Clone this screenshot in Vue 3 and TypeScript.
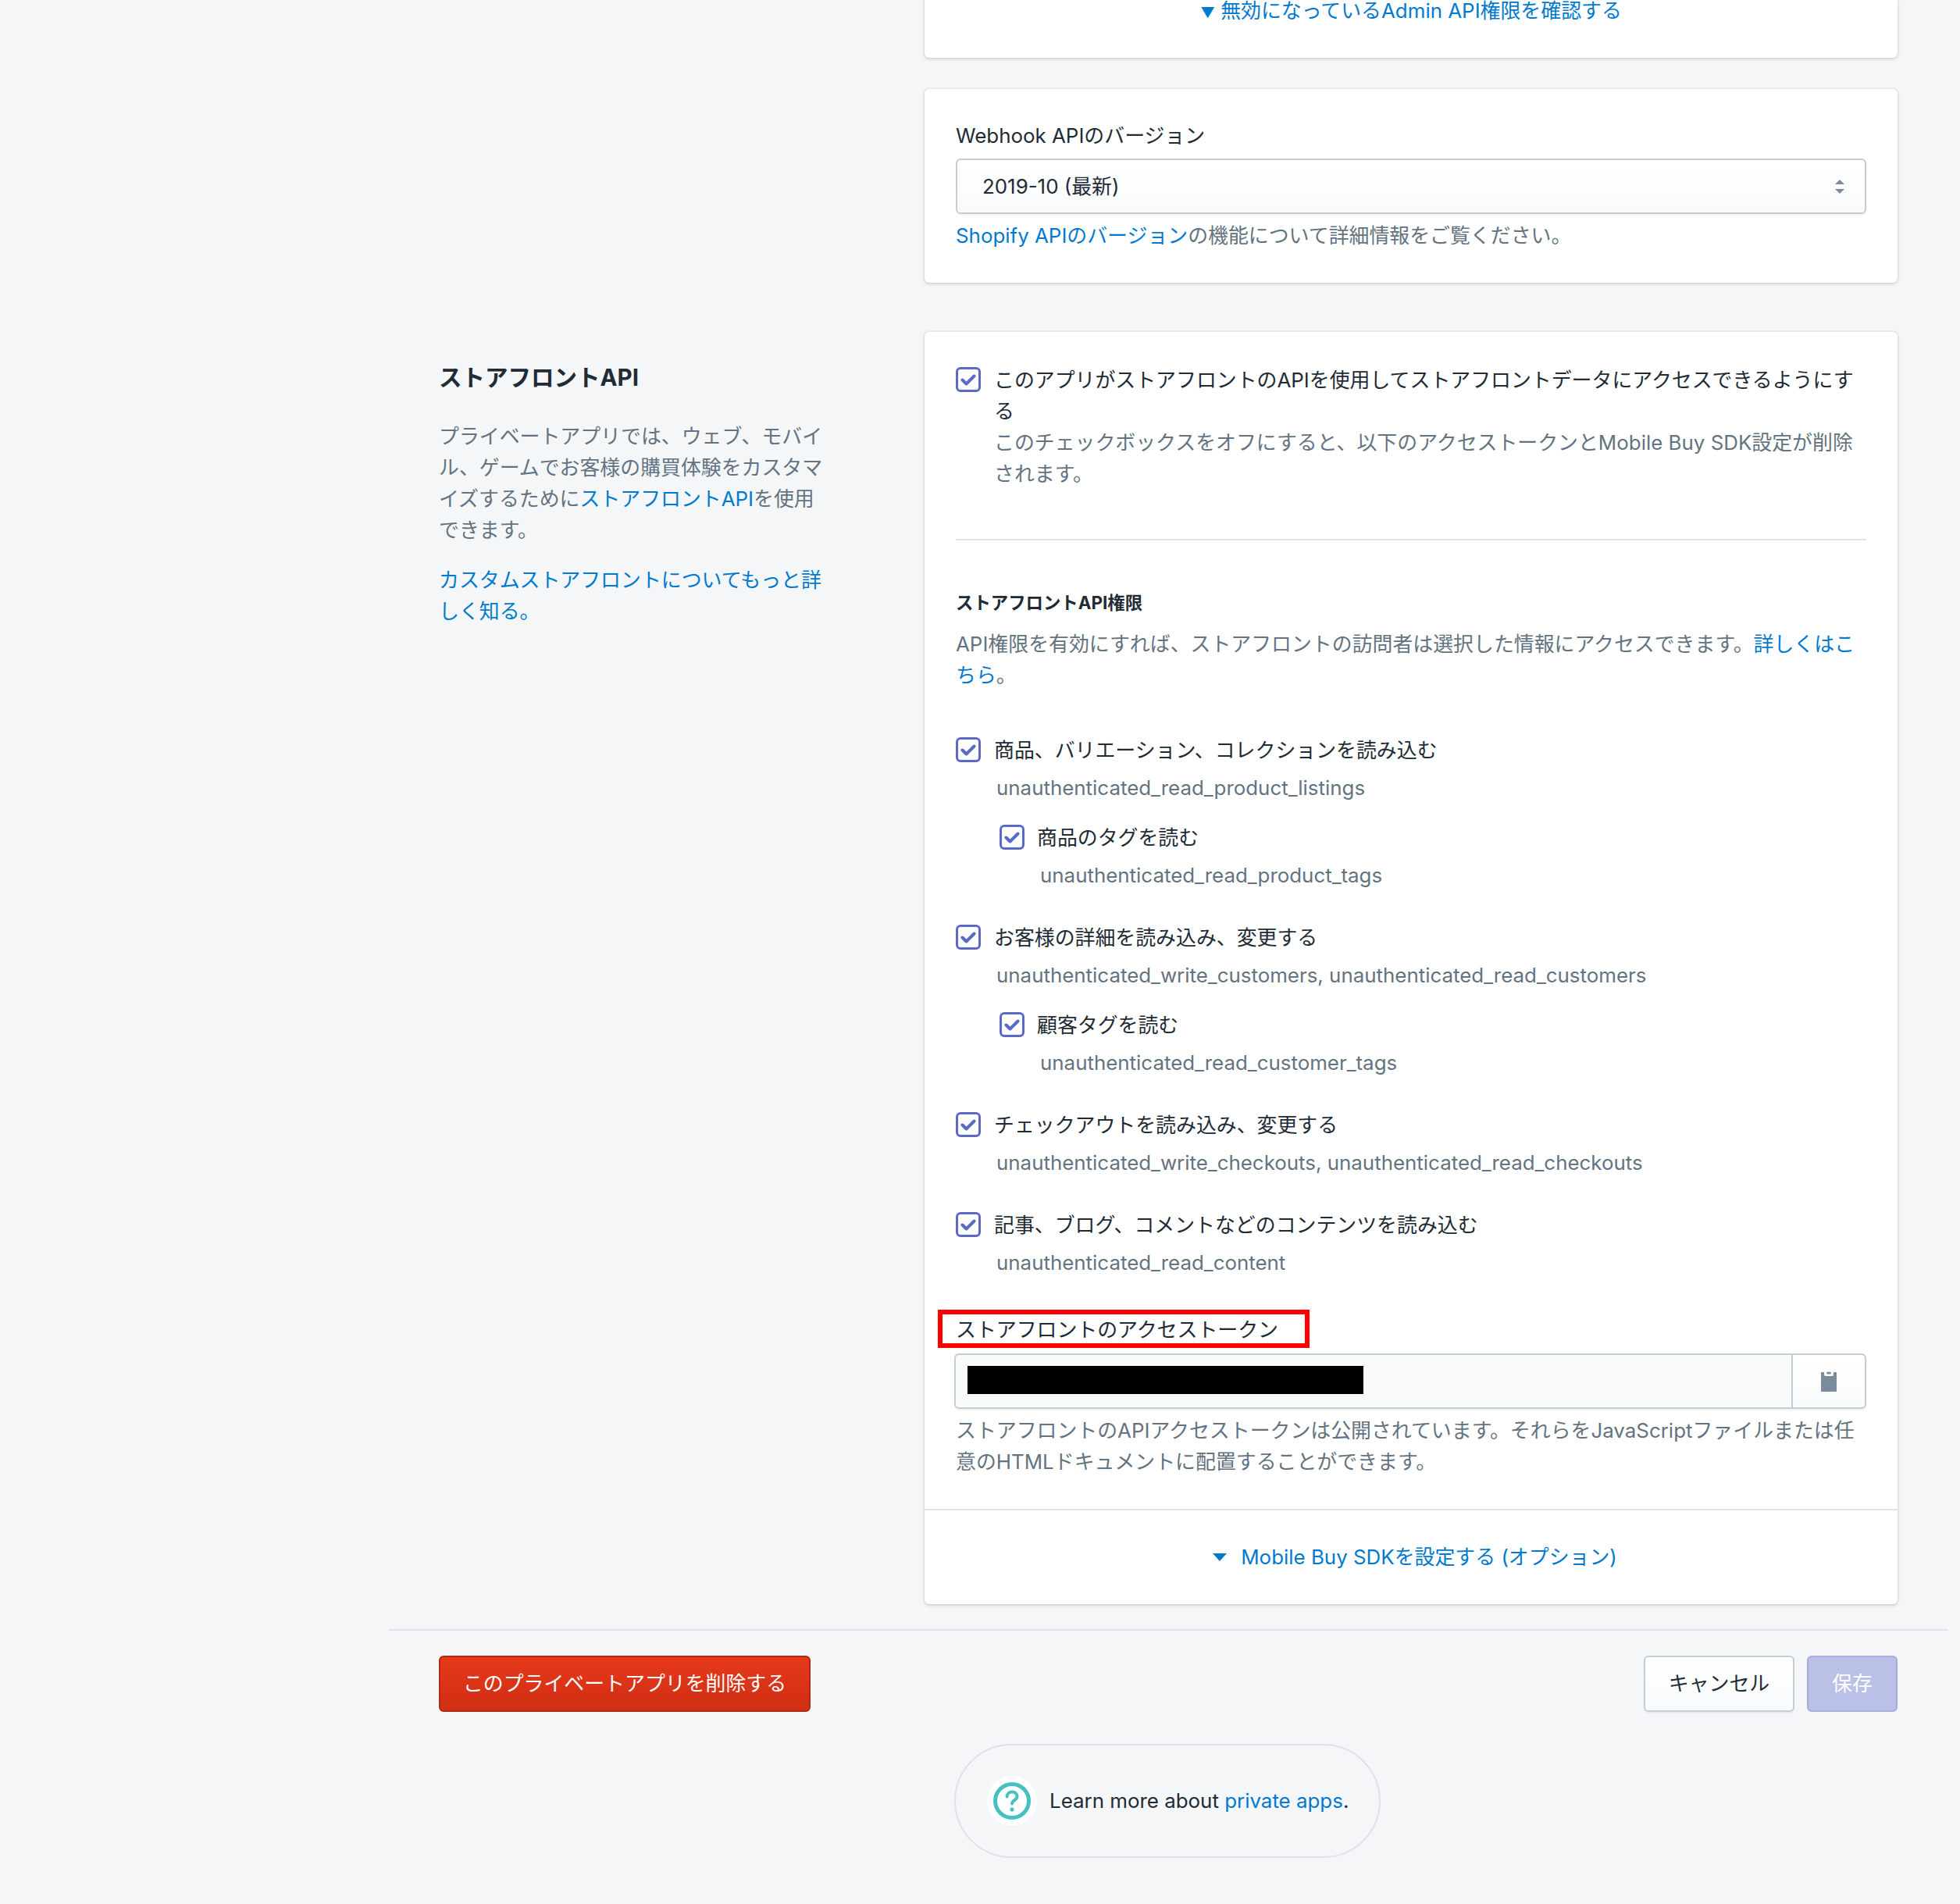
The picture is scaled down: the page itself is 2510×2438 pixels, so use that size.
<script setup lang="ts">
interface Perm {
  title: string
  code: string
  child?: { title: string; code: string }
}
const perms: Perm[] = [
  {
    title: '商品、バリエーション、コレクションを読み込む',
    code: 'unauthenticated_read_product_listings',
    child: { title: '商品のタグを読む', code: 'unauthenticated_read_product_tags' },
  },
  {
    title: 'お客様の詳細を読み込み、変更する',
    code: 'unauthenticated_write_customers, unauthenticated_read_customers',
    child: { title: '顧客タグを読む', code: 'unauthenticated_read_customer_tags' },
  },
  {
    title: 'チェックアウトを読み込み、変更する',
    code: 'unauthenticated_write_checkouts, unauthenticated_read_checkouts',
  },
  {
    title: '記事、ブログ、コメントなどのコンテンツを読み込む',
    code: 'unauthenticated_read_content',
  },
]
</script>

<template>
  <div class="page">
    <main class="main">
      <section class="row">
        <div></div>
        <div class="stack">
          <div class="card card-cut">
            <a class="link cut-link"><span class="tri">▼</span> 無効になっているAdmin API権限を確認する</a>
          </div>
          <div class="card pad hook">
            <div class="label">Webhook APIのバージョン</div>
            <div class="select">
              <span>2019-10 (最新)</span>
              <svg class="arrows" width="12" height="18" viewBox="0 0 12 18">
                <path d="M6 0l6 6H0z" fill="#7a8b9b" />
                <path d="M0 12h12l-6 6z" fill="#7a8b9b" />
              </svg>
            </div>
            <p class="help"><a class="link">Shopify APIのバージョン</a>の機能について詳細情報をご覧ください。</p>
          </div>
        </div>
      </section>

      <section class="row row-api">
        <aside class="side">
          <h2 class="side-title">ストアフロントAPI</h2>
          <p class="muted">プライベートアプリでは、ウェブ、モバイル、ゲームでお客様の購買体験をカスタマイズするために<a class="link">ストアフロントAPI</a>を使用できます。</p>
          <p class="side-more"><a class="link">カスタムストアフロントについてもっと詳しく知る。</a></p>
        </aside>

        <div class="card">
          <div class="pad api-top">
            <div class="check-row">
              <span class="box">
                <svg width="20" height="16" viewBox="0 0 20 16"><path d="M2.5 8.5l5 5 10-10" fill="none" stroke="#5c6ac4" stroke-width="4" stroke-linecap="round" stroke-linejoin="round" /></svg>
              </span>
              <div class="check-text">
                <div>このアプリがストアフロントのAPIを使用してストアフロントデータにアクセスできるようにする</div>
                <div class="muted">このチェックボックスをオフにすると、以下のアクセストークンとMobile Buy SDK設定が削除されます。</div>
              </div>
            </div>
            <hr class="rule" />
            <h3 class="sub-title">ストアフロントAPI権限</h3>
            <p class="muted sub-text">API権限を有効にすれば、ストアフロントの訪問者は選択した情報にアクセスできます。<a class="link">詳しくはこちら</a>。</p>

            <div class="perms">
              <div v-for="p in perms" :key="p.code" class="perm">
                <div class="check-row">
                  <span class="box">
                    <svg width="20" height="16" viewBox="0 0 20 16"><path d="M2.5 8.5l5 5 10-10" fill="none" stroke="#5c6ac4" stroke-width="4" stroke-linecap="round" stroke-linejoin="round" /></svg>
                  </span>
                  <span>{{ p.title }}</span>
                </div>
                <div class="code">{{ p.code }}</div>
                <div v-if="p.child" class="child">
                  <div class="check-row">
                    <span class="box">
                      <svg width="20" height="16" viewBox="0 0 20 16"><path d="M2.5 8.5l5 5 10-10" fill="none" stroke="#5c6ac4" stroke-width="4" stroke-linecap="round" stroke-linejoin="round" /></svg>
                    </span>
                    <span>{{ p.child.title }}</span>
                  </div>
                  <div class="code">{{ p.child.code }}</div>
                </div>
              </div>
            </div>

            <div class="token-label">
              ストアフロントのアクセストークン
              <span class="red-box"></span>
            </div>
            <div class="token-input">
              <div class="token-field"><span class="redact"></span></div>
              <div class="token-btn">
                <svg width="20" height="26" viewBox="0 0 20 26">
                  <path fill="#7a8c9c" fill-rule="evenodd" d="M1 1h3v3a2 2 0 0 0 2 2h8a2 2 0 0 0 2-2V1h3a1 1 0 0 1 1 1v23a1 1 0 0 1-1 1H1a1 1 0 0 1-1-1V2a1 1 0 0 1 1-1z" />
                  <ellipse cx="10" cy="2" rx="3" ry="1.6" fill="#7a8c9c" />
                </svg>
              </div>
            </div>
            <p class="help token-help">ストアフロントのAPIアクセストークンは公開されています。それらをJavaScriptファイルまたは任意のHTMLドキュメントに配置することができます。</p>
          </div>
          <div class="sdk">
            <svg width="18" height="10" viewBox="0 0 18 10"><path d="M0 0h18L9 10z" fill="#007ace" /></svg>
            <a class="link">Mobile Buy SDKを設定する (オプション)</a>
          </div>
        </div>
      </section>

      <div class="footer">
        <button class="btn danger" type="button">このプライベートアプリを削除する</button>
        <div class="footer-right">
          <button class="btn plain" type="button">キャンセル</button>
          <button class="btn save" type="button">保存</button>
        </div>
      </div>

      <div class="learn-wrap">
        <div class="learn">
          <span class="learn-icon">
            <svg width="48" height="48" viewBox="0 0 48 48">
              <circle cx="24" cy="24" r="21.5" fill="#fff" stroke="#47c1bf" stroke-width="5" />
              <path d="M17.5 18.5c0-3.6 2.9-6 6.5-6s6.5 2.4 6.5 5.7c0 4.8-6.5 5-6.5 9.3" fill="none" stroke="#47c1bf" stroke-width="4" stroke-linecap="round" />
              <circle cx="24" cy="35" r="2.6" fill="#47c1bf" />
            </svg>
          </span>
          <span>Learn more about <a class="link">private apps</a>.</span>
        </div>
      </div>
    </main>
  </div>
</template>

<style>
html, body { margin: 0; background: #f4f6f8; }
</style>

<style scoped>
.page {
  min-height: 2438px;
  padding: 0 15px 0 498px;
  box-sizing: border-box;
  background: #f4f6f8;
  color: #212b36;
  font-family: Inter, "Noto Sans CJK JP", sans-serif;
  font-size: 25.9px;
  line-height: 40px;
}
.main { display: flex; flex-direction: column; }
.row {
  display: grid;
  grid-template-columns: 622px 1246px;
  padding: 0 65px 0 64px;
}
.row-api { margin-top: 63px; }
.stack { display: flex; flex-direction: column; gap: 40px; }
.card {
  background: #fff;
  border-radius: 6px;
  box-shadow: 0 0 0 2px rgba(63, 63, 68, 0.05), 0 2px 4px rgba(63, 63, 68, 0.15);
}
.card-cut {
  border-radius: 0 0 6px 6px;
  height: 74px;
  text-align: center;
  box-sizing: border-box;
}
.cut-link { display: block; line-height: 28px; }
.tri { font-size: 18.5px; }
.pad { padding: 39px 40px 40px; }
.hook { padding-top: 40px; }
.link { color: #007ace; text-decoration: none; }
.label { line-height: 40px; margin-bottom: 9px; }
.select {
  height: 71px;
  box-sizing: border-box;
  border: 2px solid #c4cdd5;
  border-radius: 6px;
  background: linear-gradient(#fff, #f9fafb);
  box-shadow: 0 2px 2px rgba(22, 29, 37, 0.05);
  padding: 0 26px 0 32px;
  display: flex;
  align-items: center;
  justify-content: space-between;
}
.help { margin: 8px 0 0; color: #637381; }
.muted { color: #637381; margin: 0; }
.side { padding-top: 38px; width: 500px; }
.side-title { font-size: 29.5px; font-weight: 700; line-height: 40px; margin: 0 0 36px; }
.side-more { margin: 24px 0 0; }
.api-top { padding-top: 42px; padding-bottom: 40px; }
.check-row { display: flex; align-items: flex-start; gap: 17px; }
.child .check-row { gap: 16px; }
.box {
  flex: none;
  width: 32px;
  height: 32px;
  margin-top: 3px;
  box-sizing: border-box;
  border: 3px solid #5c6ac4;
  border-radius: 6px;
  background: linear-gradient(#fff, #f9fafb);
  display: flex;
  align-items: center;
  justify-content: center;
}
.check-text { flex: 1; min-width: 0; }
.rule { border: 0; height: 2px; background: #dfe3e8; margin: 63px 0 0; }
.sub-title { font-size: 22.4px; font-weight: 700; line-height: 40px; margin: 60px 0 0; }
.sub-text { margin-top: 13px; }
.perms { display: flex; flex-direction: column; gap: 40px; margin-top: 56px; }
.code { color: #637381; margin: 8px 0 0 52px; }
.child { margin: 24px 0 0 56px; }
.token-label { position: relative; margin-top: 46px; width: max-content; }
.red-box {
  position: absolute;
  left: -23px;
  right: -40px;
  top: -6px;
  bottom: -3px;
  border: 6px solid #f00;
  pointer-events: none;
}
.token-input {
  display: flex;
  margin: 10px 0 0 -2px;
  height: 71px;
  box-sizing: border-box;
  border: 2px solid #c4cdd5;
  border-radius: 6px;
  background: #f9fafb;
  box-shadow: 0 2px 2px rgba(22, 29, 37, 0.05);
}
.token-field { flex: 1; padding: 14px 15px; box-sizing: border-box; }
.redact { display: block; width: 507px; height: 36px; background: #000; }
.token-btn {
  width: 92px;
  border-left: 2px solid #c4cdd5;
  background: linear-gradient(#fff, #f9fafb);
  border-radius: 0 5px 5px 0;
  display: flex;
  align-items: center;
  justify-content: center;
}
.token-help { margin-top: 8px; }
.sdk {
  border-top: 2px solid #dfe3e8;
  padding: 40px 40px 40px 50px;
  display: flex;
  align-items: center;
  justify-content: center;
  gap: 18px;
}
.footer {
  margin-top: 32px;
  border-top: 2px solid #dfe3e8;
  padding: 32px 65px 0 64px;
  display: flex;
  justify-content: space-between;
}
.footer-right { display: flex; gap: 16px; }
.btn {
  height: 72px;
  box-sizing: border-box;
  border-radius: 6px;
  border: 2px solid;
  font: inherit;
  line-height: 40px;
  padding: 0;
}
.danger {
  width: 476px;
  background: linear-gradient(#e6391a, #d02e14);
  border-color: #b02b13;
  color: #fff;
}
.plain {
  width: 193px;
  background: linear-gradient(#fff, #f9fafb);
  border-color: #c4cdd5;
  color: #212b36;
  box-shadow: 0 2px 2px rgba(22, 29, 37, 0.05);
}
.save {
  width: 116px;
  background: #bac0e6;
  border-color: #a7aedd;
  color: #fff;
}
.learn-wrap { margin-top: 41px; display: flex; justify-content: center; padding-right: 3px; }
.learn {
  width: 546px;
  height: 146px;
  box-sizing: border-box;
  border: 2px solid #dfe3e8;
  border-radius: 73px;
  display: flex;
  align-items: center;
  gap: 16px;
  padding-left: 40px;
  white-space: nowrap;
}
.learn-icon {
  width: 64px;
  height: 64px;
  border-radius: 50%;
  background: #fff;
  display: flex;
  align-items: center;
  justify-content: center;
  flex: none;
}
</style>
